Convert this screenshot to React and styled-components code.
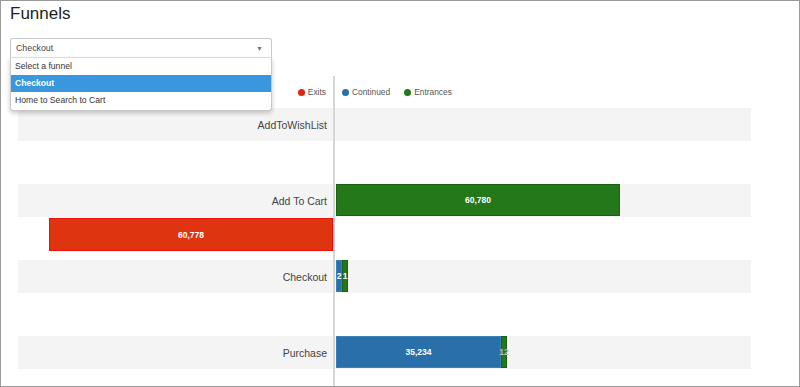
import React from 'react';
import styled, { createGlobalStyle } from 'styled-components';

const GlobalStyle = createGlobalStyle`
  html, body {
    margin: 0;
    padding: 0;
    background: #fff;
    font-family: 'Liberation Sans', Arial, sans-serif;
  }
`;

const SCALE = 284 / 60780;

const steps = [
  { name: 'AddToWishList', continued: 0, entrances: 0, exits: 0 },
  { name: 'Add To Cart', continued: 0, entrances: 60780, exits: 60778 },
  { name: 'Checkout', continued: 2, entrances: 1, exits: 0 },
  { name: 'Purchase', continued: 35234, entrances: 12, exits: 0 },
];

const COLORS = {
  exits: { fill: '#de3510', border: '#f0100a' },
  continued: { fill: '#2970aa', border: '#3a7fb8' },
  entrances: { fill: '#24781a', border: '#1b6113' },
};

const Frame = styled.div`
  width: 800px;
  height: 387px;
  box-sizing: border-box;
  border: 1px solid #9a9a9a;
  padding: 3px 9px 0;
  overflow: hidden;
  position: relative;
`;

const Title = styled.h1`
  margin: 0;
  font-size: 17px;
  line-height: 20px;
  font-weight: normal;
  color: #222;
`;

const SelectWrap = styled.div`
  position: relative;
  width: 262px;
  margin-top: 14px;
  z-index: 2;
`;

const SelectBox = styled.div`
  height: 20px;
  box-sizing: border-box;
  border: 1px solid #c8c8c8;
  border-bottom-color: #e2e2e2;
  border-radius: 3px 3px 0 0;
  display: flex;
  align-items: center;
  justify-content: space-between;
  padding: 0 8px 0 5px;
  font-size: 8.8px;
  color: #444;
  background: #fff;
`;

const Caret = styled.span`
  font-size: 7px;
  color: #777;
`;

const Menu = styled.ul`
  position: absolute;
  top: 20px;
  left: 0;
  width: 262px;
  box-sizing: border-box;
  margin: 0;
  padding: 0 0 1px;
  list-style: none;
  background: #fff;
  border: 1px solid #c8c8c8;
  border-top: none;
  border-radius: 0 0 3px 3px;
  box-shadow: 0 2px 5px rgba(0, 0, 0, 0.22);
`;

const MenuItem = styled.li`
  height: 17px;
  line-height: 17px;
  padding-left: 4px;
  font-size: 8.6px;
  color: ${(p) => (p.$active ? '#fff' : '#333')};
  font-weight: ${(p) => (p.$active ? 'bold' : 'normal')};
  background: ${(p) => (p.$active ? '#3a96dd' : 'transparent')};
`;

const Chart = styled.div`
  margin: 18px 0 0 8px;
  display: grid;
  grid-template-columns: 315px 2px 416px;
`;

const Axis = styled.div`
  background: #d6d6d6;
`;

const LegendSide = styled.div`
  height: 32px;
  display: flex;
  align-items: center;
  justify-content: ${(p) => (p.$left ? 'flex-end' : 'flex-start')};
  padding: ${(p) => (p.$left ? '0 7px 0 0' : '0 0 0 7px')};
  gap: 14px;
`;

const LegendItem = styled.span`
  display: flex;
  align-items: center;
  gap: 3px;
  font-size: 8.4px;
  color: #555;
`;

const Dot = styled.span`
  width: 7px;
  height: 7px;
  border-radius: 50%;
  background: ${(p) => p.$color};
`;

const Band = styled.div`
  height: 33px;
  background: #f4f4f4;
  display: flex;
  align-items: center;
  justify-content: ${(p) => (p.$left ? 'flex-end' : 'flex-start')};
  padding-right: ${(p) => (p.$left ? '6px' : '0')};
  box-sizing: border-box;
`;

const StepLabel = styled.span`
  font-size: 10.5px;
  color: #444;
`;

const BarRow = styled.div`
  height: 100%;
  display: flex;
  align-items: stretch;
  padding: 0 0 1px 1px;
  box-sizing: border-box;
`;

const ExitCell = styled.div`
  height: 43px;
  display: flex;
  justify-content: flex-end;
  align-items: flex-start;
  padding-top: 1px;
  box-sizing: border-box;
`;

const Bar = styled.div`
  position: relative;
  box-sizing: border-box;
  height: ${(p) => (p.$height ? `${p.$height}px` : 'auto')};
  background: ${(p) => p.$fill};
  border: 1px solid ${(p) => p.$border};
  display: flex;
  align-items: center;
  justify-content: center;
  flex-shrink: 0;
`;

const BarValue = styled.span`
  font-size: 8.5px;
  font-weight: bold;
  color: ${(p) => (p.$faint ? '#bbb' : '#fff')};
  white-space: nowrap;
`;

const fmt = (n) => n.toLocaleString('en-US');

const barWidth = (v) => Math.max(6, Math.round(v * SCALE));

const FunnelBar = ({ kind, value, height }) => {
  const c = COLORS[kind];
  const w = barWidth(value);
  return (
    <Bar $fill={c.fill} $border={c.border} $height={height} style={{ width: w }}>
      <BarValue $faint={w < 8 && kind === 'entrances' && value > 9}>{fmt(value)}</BarValue>
    </Bar>
  );
};

const App = () => (
  <>
    <GlobalStyle />
    <Frame>
      <Title>Funnels</Title>
      <SelectWrap>
        <SelectBox>
          Checkout
          <Caret>▼</Caret>
        </SelectBox>
        <Menu>
          <MenuItem>Select a funnel</MenuItem>
          <MenuItem $active>Checkout</MenuItem>
          <MenuItem>Home to Search to Cart</MenuItem>
        </Menu>
      </SelectWrap>

      <Chart>
        <LegendSide $left>
          <LegendItem>
            <Dot $color="#e0240e" />
            Exits
          </LegendItem>
        </LegendSide>
        <Axis />
        <LegendSide>
          <LegendItem>
            <Dot $color="#2970aa" />
            Continued
          </LegendItem>
          <LegendItem>
            <Dot $color="#24781a" />
            Entrances
          </LegendItem>
        </LegendSide>

        {steps.map((s) => (
          <React.Fragment key={s.name}>
            <Band $left>
              <StepLabel>{s.name}</StepLabel>
            </Band>
            <Axis />
            <Band>
              <BarRow>
                {s.continued > 0 && <FunnelBar kind="continued" value={s.continued} />}
                {s.entrances > 0 && <FunnelBar kind="entrances" value={s.entrances} />}
              </BarRow>
            </Band>

            <ExitCell>
              {s.exits > 0 && <FunnelBar kind="exits" value={s.exits} height={33} />}
            </ExitCell>
            <Axis />
            <div />
          </React.Fragment>
        ))}
      </Chart>
    </Frame>
  </>
);

export default App;
